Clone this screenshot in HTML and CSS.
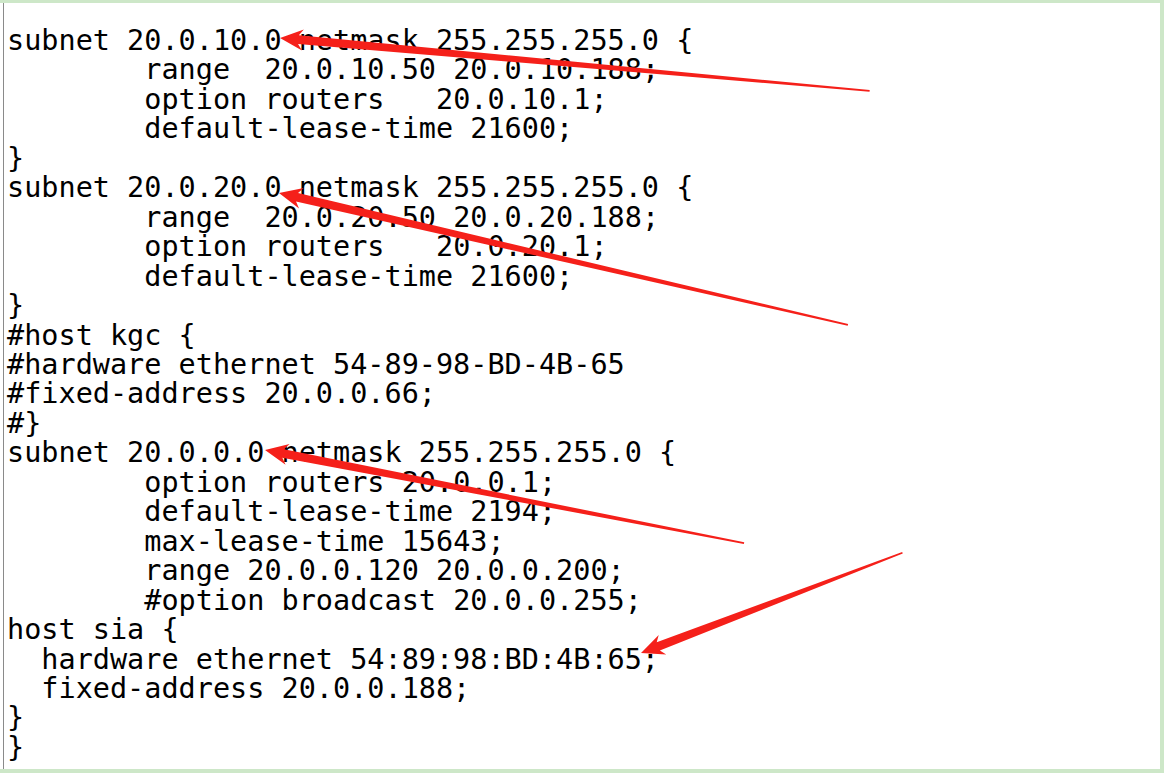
FILE: index.html
```html
<!DOCTYPE html>
<html>
<head>
<meta charset="utf-8">
<link rel="stylesheet" href="styles.css">
</head>
<body>
<div class="frame">
<div class="sheet">
<pre class="code">subnet 20.0.10.0 netmask 255.255.255.0 {
	range  20.0.10.50 20.0.10.188;
	option routers   20.0.10.1;
	default-lease-time 21600;
}
subnet 20.0.20.0 netmask 255.255.255.0 {
	range  20.0.20.50 20.0.20.188;
	option routers   20.0.20.1;
	default-lease-time 21600;
}
#host kgc {
#hardware ethernet 54-89-98-BD-4B-65
#fixed-address 20.0.0.66;
#}
subnet 20.0.0.0 netmask 255.255.255.0 {
	option routers 20.0.0.1;
	default-lease-time 2194;
	max-lease-time 15643;
	range 20.0.0.120 20.0.0.200;
	#option broadcast 20.0.0.255;
host sia {
  hardware ethernet 54:89:98:BD:4B:65;
  fixed-address 20.0.0.188;
}
}</pre>
<svg class="arrows" width="1164" height="773" viewBox="0 0 1164 773">
  <g fill="#f5201a">
    <polygon transform="translate(280,38) rotate(5.13)" points="0,0 23,-10.5 18.5,-4.4 592,-0.9 592,0.9 18.5,4.4 23,10.5"/>
    <polygon transform="translate(279,193) rotate(13.06)" points="0,0 23,-10.5 18.5,-4.4 584,-0.9 584,0.9 18.5,4.4 23,10.5"/>
    <polygon transform="translate(265,450) rotate(10.99)" points="0,0 23,-10.5 18.5,-4.4 488,-0.9 488,0.9 18.5,4.4 23,10.5"/>
    <polygon transform="translate(641,653) rotate(-20.96)" points="0,0 23,-10.5 18.5,-4.4 280,-0.8 280,0.8 18.5,4.4 23,10.5"/>
  </g>
</svg>
</div>
</div>
</body>
</html>
```

FILE: styles.css
```css
html, body {
  margin: 0;
  padding: 0;
  width: 1164px;
  height: 773px;
  overflow: hidden;
  background: #cde7c8;
}
.frame {
  box-sizing: border-box;
  width: 1164px;
  height: 773px;
  padding: 3px 4px 4px 0;
}
.sheet {
  position: relative;
  box-sizing: border-box;
  width: 100%;
  height: 100%;
  background: #ffffff;
  border-left: 3px solid #ffffff;
  box-shadow: inset 1px 0 0 #8a8a8a;
  padding: 23px 0 0 4px;
}
.code {
  margin: 0;
  font-family: "DejaVu Sans Mono", "Liberation Mono", monospace;
  font-size: 28.5px;
  line-height: 29.45px;
  color: #000000;
  tab-size: 8;
  -moz-tab-size: 8;
  white-space: pre;
}
.arrows {
  position: absolute;
  left: -3px;
  top: -3px;
  pointer-events: none;
}
```
